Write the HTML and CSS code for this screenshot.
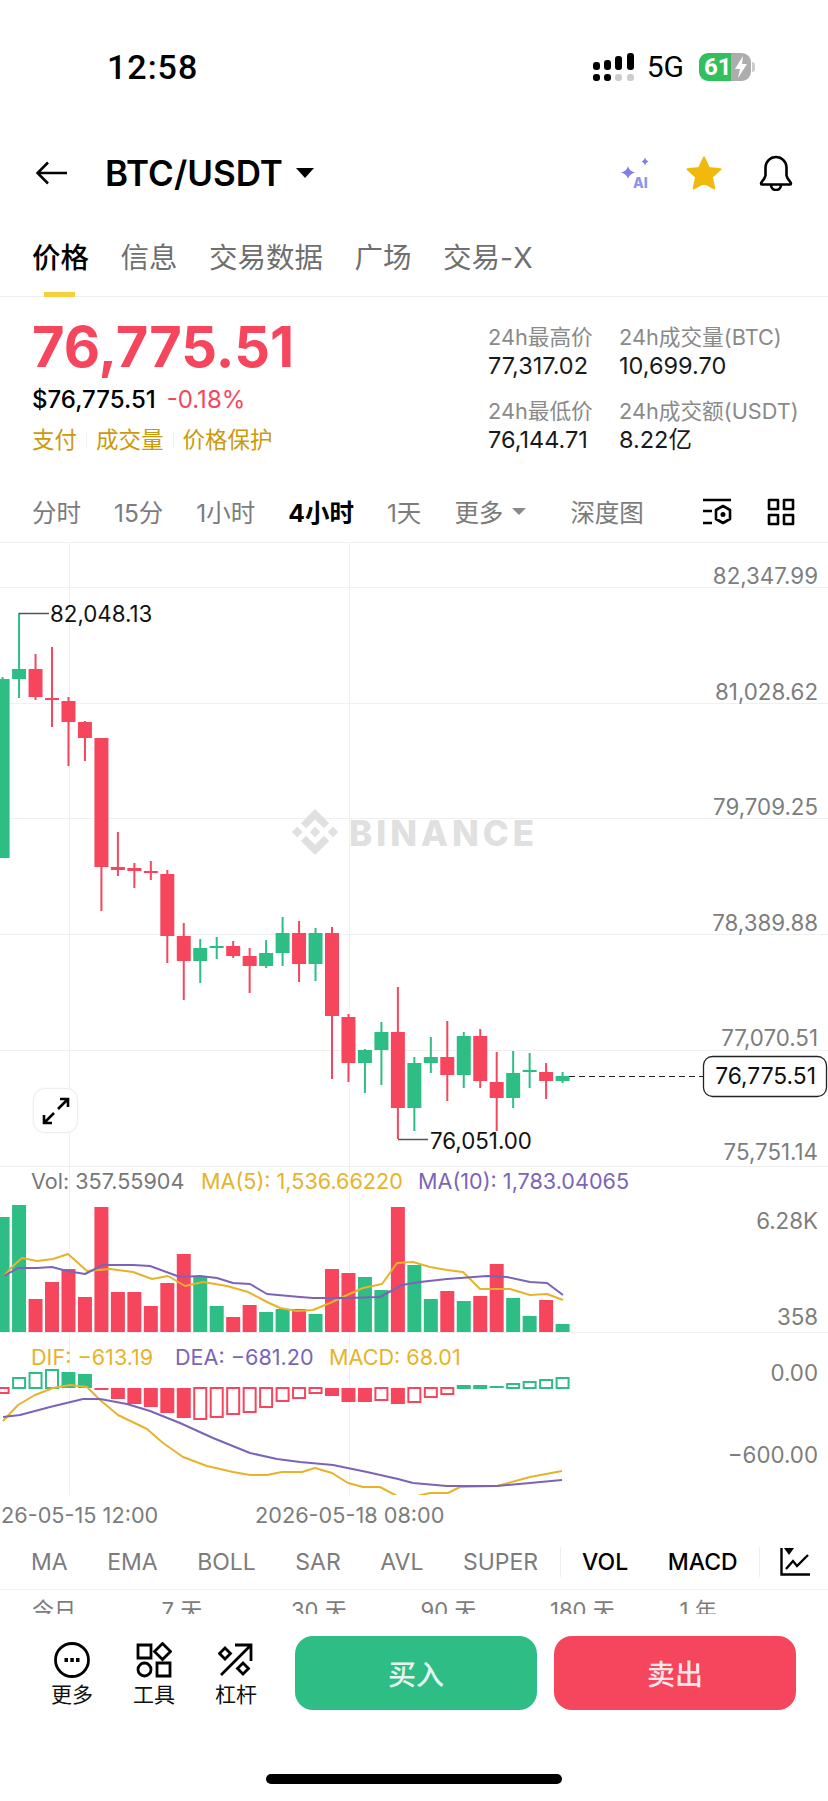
FILE: index.html
```html
<!DOCTYPE html>
<html lang="zh-CN">
<head>
    <meta charset="UTF-8">
    <title>BTC/USDT</title>
    <link rel="stylesheet" href="styles.css">
</head>
<body>
    <div class="status">
        <span class="time">12:58</span>
        <div class="status-right">
            <svg class="signal" width="41" height="28" viewBox="0 0 41 28">
                <rect x="0" y="9" width="7" height="8" rx="3"/>
                <rect x="11" y="7" width="7" height="10" rx="3"/>
                <rect x="22" y="3" width="7" height="14" rx="3"/>
                <rect x="34" y="0" width="7" height="17" rx="3"/>
                <rect x="0" y="21" width="7" height="7" rx="3"/>
                <rect x="11" y="21" width="7" height="7" rx="3"/>
                <rect x="22" y="21" width="7" height="7" rx="3" fill="#ccc"/>
                <rect x="34" y="21" width="7" height="7" rx="3" fill="#ccc"/>
            </svg>
            <span class="net">5G</span>
            <div class="battery">
                <span class="level">61</span>
                <svg class="bolt" width="14" height="22" viewBox="0 0 14 22"><path d="M9 0 1 13h5l-2 9 9-14H8z" fill="#fff"/></svg>
            </div>
            <span class="nub"></span>
        </div>
    </div>

    <div class="nav">
        <svg class="back" width="32" height="24" viewBox="0 0 32 24"><path d="M31 12H2M12 1.500 1.500 12 12 22.500" fill="none" stroke="#000" stroke-width="2.600"/></svg>
        <span class="pair">BTC/USDT</span>
        <span class="pair-caret"></span>
        <div class="nav-icons">
            <svg class="ai" width="32" height="32" viewBox="0 0 32 32">
                <path d="M7 9q1 5 7 6.500q-6 1.500-7 6.500q-1-5-7-6.500q6-1.500 7-6.500z" fill="#7f7df0"/>
                <path d="M24 0.500q.5 3 3.500 4q-3 1-3.500 4.500q-.5-3.500-3.500-4.500q3-1 3.500-4z" fill="#7f7df0"/>
                <text x="12" y="31" class="ai-mark">AI</text>
            </svg>
            <svg class="star" width="36" height="34" viewBox="0 0 36 34"><path d="M18 1.500l4.900 10.500 11.600 1.300-8.600 7.800 2.400 11.400L18 26.800 7.700 32.500l2.400-11.400-8.600-7.800 11.600-1.300z" fill="#f0b90b" stroke="#f0b90b" stroke-width="2" stroke-linejoin="round"/></svg>
            <svg class="bell" width="34" height="36" viewBox="0 0 34 36"><path d="M2 28.500c0-2 3.500-3.500 4.500-8V12.500a10.500 10.500 0 0 1 21 0v8c1 4.500 4.500 6 4.500 8 0 .6-.5 1-1 1H3c-.6 0-1-.4-1-1zM12 30a5 5 0 0 0 10 0" fill="none" stroke="#000" stroke-width="2.600" stroke-linejoin="round"/></svg>
        </div>
    </div>

    <div class="tabs">
        <span class="tab active">价格</span>
        <span class="tab">信息</span>
        <span class="tab">交易数据</span>
        <span class="tab">广场</span>
        <span class="tab">交易-X</span>
    </div>

    <div class="ticker">
        <div class="ticker-main">
            <div class="last-price">76,775.51</div>
            <div class="usd-row"><span class="usd">$76,775.51</span><span class="change">-0.18%</span></div>
            <div class="links"><span>支付</span><i></i><span>成交量</span><i></i><span>价格保护</span></div>
        </div>
        <div class="stats">
            <div class="stat-label">24h最高价</div>
            <div class="stat-label">24h成交量(BTC)</div>
            <div class="stat-value">77,317.02</div>
            <div class="stat-value">10,699.70</div>
            <div class="stat-label second">24h最低价</div>
            <div class="stat-label second">24h成交额(USDT)</div>
            <div class="stat-value">76,144.71</div>
            <div class="stat-value">8.22亿</div>
        </div>
    </div>

    <div class="frames">
        <span>分时</span>
        <span>15分</span>
        <span>1小时</span>
        <span class="on">4小时</span>
        <span>1天</span>
        <span class="more">更多<i class="more-caret"></i></span>
        <span class="depth">深度图</span>
        <svg class="frame-icon" width="30" height="28" viewBox="0 0 30 28">
            <path d="M1 2h28M1 13h9M1 25h9" fill="none" stroke="#000" stroke-width="2.600"/>
            <path d="M21 8l7 4v9l-7 4-7-4v-9z" fill="none" stroke="#000" stroke-width="2.600" stroke-linejoin="round"/>
            <circle cx="21" cy="16.500" r="2.500"/>
        </svg>
        <svg class="grid-icon" width="28" height="28" viewBox="0 0 28 28">
            <path d="M2 2h9v9H2zM17 2h9v9h-9zM2 17h9v9H2zM17 17h9v9h-9z" fill="none" stroke="#000" stroke-width="2.600" stroke-linejoin="round"/>
        </svg>
    </div>

    <div class="chart">
        <svg id="plot" width="828" height="952" viewBox="0 543 828 952"></svg>
        <div class="expand">
            <svg width="28" height="28" viewBox="0 0 28 28"><path d="M16 12 26 2M18 2h8v8M12 16 2 26M2 18v8h8" fill="none" stroke="#000" stroke-width="2.600"/></svg>
        </div>
    </div>

    <div class="dates">
        <span class="date-a">26-05-15 12:00</span>
        <span>2026-05-18 08:00</span>
    </div>

    <div class="indicators">
        <span>MA</span>
        <span>EMA</span>
        <span>BOLL</span>
        <span>SAR</span>
        <span>AVL</span>
        <span>SUPER</span>
        <i class="ind-sep"></i>
        <span class="on">VOL</span>
        <span class="on">MACD</span>
        <i class="ind-sep"></i>
        <svg class="ind-icon" width="30" height="28" viewBox="0 0 30 28">
            <path d="M1.500 0v26.500H30" fill="none" stroke="#000" stroke-width="2.400"/>
            <path d="M6 21l7-8 4 5 11-11" fill="none" stroke="#000" stroke-width="2.400"/>
            <path d="M4 0h10l-5 7z"/>
        </svg>
    </div>

    <div class="ranges">
        <span>今日</span>
        <span>7 天</span>
        <span>30 天</span>
        <span>90 天</span>
        <span>180 天</span>
        <span>1 年</span>
    </div>

    <div class="actions">
        <div class="tool tool-more">
            <svg width="36" height="36" viewBox="0 0 36 36">
                <circle cx="18" cy="18" r="16.500" fill="none" stroke="#000" stroke-width="2.800"/>
                <path d="M10.500 16h3.500v4h-3.500zM16.300 16h3.500v4h-3.500zM22 16h3.500v4H22z"/>
            </svg>
            <span>更多</span>
        </div>
        <div class="tool tool-kit">
            <svg width="36" height="36" viewBox="0 0 36 36">
                <path d="M2 3h13v13H2zM21 21h13v13H21z" fill="none" stroke="#000" stroke-width="2.800"/>
                <path d="M26.500 1.500l8 8-8 8-8-8z" fill="none" stroke="#000" stroke-width="2.800"/>
                <circle cx="8.500" cy="27.500" r="6.500" fill="none" stroke="#000" stroke-width="2.800"/>
            </svg>
            <span>工具</span>
        </div>
        <div class="tool tool-lever">
            <svg width="36" height="36" viewBox="0 0 36 36">
                <path d="M3 33 33 3M17 3h16v16" fill="none" stroke="#000" stroke-width="2.800"/>
                <path d="M7 6l5.500 5.500L7 17l-5.500-5.500zM25 21l5.500 5.500L25 32l-5.500-5.500z" fill="none" stroke="#000" stroke-width="2.800"/>
            </svg>
            <span>杠杆</span>
        </div>
        <div class="trade buy">买入</div>
        <div class="trade sell">卖出</div>
    </div>

    <div class="home-bar"></div>

    <script src="chart.js"></script>
</body>
</html>
```

FILE: styles.css
```css
*{
    box-sizing: border-box;
}
body{
    margin: 0;
    width: 828px;
    height: 1801px;
    overflow: hidden;
    background-color: #fff;
    color: #000;
    font-family: Inter, "Noto Sans CJK SC", sans-serif;
}

/* status bar */
.status{
    display: flex;
    align-items: center;
    justify-content: space-between;
    height: 143px;
    padding: 0 73px 10px 107px;
}
.time{
    font-family: Roboto, sans-serif;
    font-size: 34px;
    font-weight: 500;
    letter-spacing: 1px;
}
.status-right{
    display: flex;
    align-items: center;
}
.net{
    margin-left: 13px;
    font-family: Roboto, sans-serif;
    font-size: 30px;
    font-weight: 400;
}
.battery{
    display: flex;
    align-items: center;
    width: 52px;
    height: 28px;
    margin-left: 15px;
    border-radius: 9px;
    overflow: hidden;
    background: linear-gradient(90deg, #34bf5f 32px, #adadad 32px);
}
.level{
    width: 32px;
    padding-left: 5px;
    color: #fff;
    font-family: Roboto, sans-serif;
    font-size: 24px;
    font-weight: 700;
    line-height: 28px;
}
.bolt{
    margin-left: 3px;
}
.nub{
    width: 3px;
    height: 10px;
    margin-left: 1px;
    border-radius: 0 3px 3px 0;
    background-color: #ccc;
}

/* title row */
.nav{
    display: flex;
    align-items: center;
    height: 60px;
    padding-left: 36px;
}
.pair{
    margin-left: 37px;
    font-size: 35px;
    font-weight: 600;
}
.pair-caret{
    width: 0;
    height: 0;
    margin-left: 13px;
    border-top: 10px solid #000;
    border-left: 9px solid transparent;
    border-right: 9px solid transparent;
}
.nav-icons{
    display: flex;
    align-items: center;
    gap: 33px;
    margin-left: auto;
    padding-right: 35px;
}
.ai{
    overflow: visible;
}
.star{
    margin-right: 4px;
}
.ai-mark{
    font-size: 14px;
    font-weight: 800;
    fill: #8a96ea;
}

/* tabs */
.tabs{
    display: flex;
    gap: 31.500px;
    height: 94px;
    padding: 35px 0 0 32px;
    border-bottom: 1px solid #eee;
}
.tab{
    position: relative;
    height: 40px;
    color: #6f6f6f;
    font-size: 28.500px;
    line-height: 40px;
}
.tab.active{
    color: #000;
    font-weight: 500;
}
.tab.active::after{
    content: "";
    position: absolute;
    left: 12px;
    top: 54px;
    width: 31px;
    height: 5px;
    background-color: #f5cf3c;
}

/* price block */
.ticker{
    display: flex;
    height: 186px;
    padding-left: 32px;
}
.ticker-main{
    width: 456px;
    padding-top: 20px;
}
.last-price{
    color: #f6465d;
    font-size: 56px;
    font-weight: 700;
    line-height: 60px;
}
.usd-row{
    display: flex;
    gap: 11px;
    margin-top: 8px;
    font-size: 24px;
    line-height: 30px;
}
.usd{
    font-weight: 500;
}
.change{
    color: #f6465d;
}
.links{
    display: flex;
    align-items: center;
    gap: 9px;
    margin-top: 10px;
    color: #cb9a0c;
    font-size: 22.500px;
    line-height: 30px;
}
.links i{
    width: 1px;
    height: 16px;
    background-color: #f2f2f2;
}
.stats{
    display: grid;
    grid-template-columns: 131px auto;
    align-content: start;
    padding-top: 26px;
}
.stat-label{
    color: #8a8a8a;
    font-size: 21.700px;
    line-height: 28px;
}
.stat-label.second{
    margin-top: 16px;
}
.stat-value{
    color: #1a1a1a;
    font-size: 23.500px;
    line-height: 30px;
}

/* timeframe row */
.frames{
    display: flex;
    align-items: center;
    gap: 33px;
    height: 60px;
    padding: 0 33px 2px 32px;
    border-bottom: 1px solid #f0f0f0;
    color: #7c7c7c;
    font-size: 24.500px;
}
.frames .on{
    color: #000;
    font-weight: 700;
}
.more{
    display: flex;
    align-items: center;
}
.more-caret{
    width: 0;
    height: 0;
    margin-left: 9px;
    border-top: 7px solid #8a8a8a;
    border-left: 7px solid transparent;
    border-right: 7px solid transparent;
}
.depth{
    margin-left: 11px;
}
.frame-icon{
    margin-left: auto;
}
.grid-icon{
    margin-left: 2px;
}

/* chart */
.chart{
    position: relative;
    height: 952px;
}
#plot{
    display: block;
}
#plot text{
    font-size: 22.300px;
}
#plot text.legend{
    font-size: 21.600px;
}
#plot text.last{
    font-size: 22.800px;
}
#plot text.mark{
    font-size: 35px;
    font-weight: 800;
    letter-spacing: 4px;
}
.expand{
    position: absolute;
    left: 33px;
    top: 545px;
    display: flex;
    align-items: center;
    justify-content: center;
    width: 45px;
    height: 45px;
    border: 1px solid #eee;
    border-radius: 12px;
    background-color: #fff;
    box-shadow: 0 0 2px #eee;
}

/* date axis */
.dates{
    display: flex;
    height: 40px;
    padding-left: 1px;
    color: #7c7c7c;
    font-size: 21.700px;
    line-height: 40px;
}
.date-a{
    width: 254px;
}

/* indicator row */
.indicators{
    display: flex;
    align-items: center;
    gap: 39.500px;
    height: 55px;
    padding-left: 31px;
    border-bottom: 1px solid #f2f2f2;
    color: #7c7c7c;
    font-size: 23px;
}
.indicators .on{
    color: #000;
    font-weight: 500;
}
.ind-sep{
    width: 1px;
    height: 30px;
    margin: 0 -18px;
    background-color: #eee;
}
.ind-icon{
    margin-left: -2px;
}

/* cut off by the action bar, as on the phone */
.ranges{
    display: grid;
    grid-template-columns: repeat(6, 129.500px);
    height: 24px;
    overflow: hidden;
    padding-left: 32px;
    color: #7c7c7c;
    font-size: 22px;
    line-height: 40px;
}

/* bottom bar */
.actions{
    display: flex;
    align-items: flex-start;
    height: 160px;
    padding: 22px 32px 0 0;
}
.tool{
    display: flex;
    flex-direction: column;
    align-items: center;
    width: 44px;
    margin-top: 6px;
    font-size: 21px;
    line-height: 26px;
}
.tool span{
    flex: none;
    margin-top: 4px;
    color: #111;
}
.tool-more{
    margin-left: 50px;
}
.tool-kit,
.tool-lever{
    margin-left: 38px;
}
.trade{
    display: flex;
    align-items: center;
    justify-content: center;
    width: 242px;
    height: 74px;
    border-radius: 18px;
    color: rgba(255,255,255,.9);
    font-size: 28px;
    font-weight: 500;
}
.buy{
    margin-left: 37px;
    background-color: #2ebd85;
}
.sell{
    margin-left: 17px;
    background-color: #f6465d;
}
.home-bar{
    width: 296px;
    height: 10px;
    margin-left: 266px;
    border-radius: 5px;
    background-color: #000;
}
```

FILE: chart.js
```js
var RED = "#f6465d";
var GREEN = "#2ebd85";
var YELLOW = "#e6b32a";
var PURPLE = "#7b64b8";
var GREY = "#7d7d7d";
var BW = 14; //candle width

function cx(k){
    return 2.6 + 16.47 * k;
}

//[color, wickTop, bodyTop, bodyBottom, wickBottom]
var candles = [
    ["g",677,679,858,858],["g",613,669,679,698],["r",654,669,697,700],["r",647,698,700,727],
    ["r",697,701,722,766],["r",721,722,738,761],["r",738,738,867,911],["r",832,867,870,876],
    ["r",863,868,871,888],["r",861,871,873,880],["r",870,874,936,963],["r",923,936,961,1000],
    ["g",939,948,961,983],["g",937,946,948,959],["r",941,946,956,958],["r",948,956,966,993],
    ["g",940,953,966,968],["g",917,933,953,966],["r",921,933,964,982],["g",928,933,964,981],
    ["r",927,933,1016,1079],["r",1014,1017,1063,1082],["g",1049,1050,1063,1093],["g",1022,1032,1050,1085],
    ["r",987,1032,1108,1139],["g",1057,1063,1108,1131],["g",1037,1057,1063,1073],["r",1021,1057,1075,1101],
    ["g",1032,1036,1075,1088],["r",1029,1036,1081,1088],["r",1052,1082,1098,1131],["g",1051,1073,1098,1108],
    ["g",1053,1070,1072,1088],["r",1063,1072,1081,1099],["g",1072,1076,1081,1083]
];

var volTops = [1217,1205,1299,1282,1269,1297,1207,1292,1292,1306,1283,1254,1277,1306,1317,1305,1312,1309,
    1309,1314,1269,1273,1277,1290,1207,1265,1299,1291,1301,1296,1264,1298,1316,1300,1324];

//[color, style, top, bottom]  s = solid, h = hollow
var macd = [
    ["r","h",1388,1393],["g","h",1378,1388],["g","h",1373,1388],["g","h",1370,1388],["g","s",1372,1388],
    ["g","s",1374,1388],["r","s",1388,1390],["r","s",1388,1399],["r","s",1388,1404],["r","s",1388,1407],
    ["r","s",1388,1413],["r","s",1388,1418],["r","h",1388,1419],["r","h",1388,1417],["r","h",1388,1414],
    ["r","h",1388,1412],["r","h",1388,1407],["r","h",1388,1401],["r","h",1388,1398],["r","h",1388,1393],
    ["r","s",1388,1396],["r","s",1388,1402],["r","s",1388,1402],["r","h",1388,1400],["r","s",1388,1404],
    ["r","h",1388,1402],["r","h",1388,1397],["r","h",1388,1394],["g","s",1385,1389],["g","s",1385,1389],
    ["g","s",1386,1388],["g","h",1384,1388],["g","h",1382,1388],["g","h",1380,1388],["g","h",1378,1388]
];

var ma5 = "4,1276 12,1267 22,1258 37,1261 53,1259 68,1254 87,1271 110,1269 133,1272 152,1279 168,1276 185,1286 203,1282 227,1286 248,1292 267,1302 280,1308 297,1311 313,1310 330,1303 347,1295 363,1288 382,1284 397,1263 413,1262 430,1267 447,1270 463,1272 480,1289 510,1289 530,1295 547,1294 563,1300";
var ma10 = "4,1276 18,1268 37,1268 52,1267 67,1271 85,1274 103,1265 133,1265 150,1266 180,1277 200,1276 217,1278 233,1283 250,1284 267,1294 300,1297 313,1298 347,1298 380,1297 402,1285 420,1282 447,1279 487,1276 507,1277 530,1282 547,1283 563,1295";
var dif = "3,1421 18,1405 35,1395 53,1388 70,1385 87,1387 100,1400 118,1415 147,1429 163,1443 183,1457 207,1466 233,1472 250,1475 267,1475 282,1472 302,1472 315,1468 332,1473 348,1483 363,1487 380,1487 397,1496 417,1496 430,1493 448,1493 460,1487 497,1486 530,1477 562,1471";
var dea = "3,1417 20,1415 50,1407 83,1399 100,1399 127,1404 150,1411 180,1423 213,1438 250,1453 277,1459 300,1462 333,1465 367,1472 398,1479 413,1483 447,1486 497,1486 530,1483 562,1480";

var out = [];

function rect(x, y, w, h, fill){
    out.push('<rect x="' + x + '" y="' + y + '" width="' + w + '" height="' + h + '" fill="' + fill + '"/>');
}
function label(x, y, str, fill, anchor, cls){
    out.push('<text x="' + x + '" y="' + y + '" fill="' + fill + '" text-anchor="' + (anchor || "start") + '" class="' + (cls || "") + '">' + str + '</text>');
}
function legend(x, y, str, fill){
    label(x, y, str, fill, "start", "legend");
}
function line(points, color){
    out.push('<polyline points="' + points + '" fill="none" stroke="' + color + '" stroke-width="2" stroke-linejoin="round"/>');
}

//grid
[587,703,818,934,1050,1166,1332,1495].forEach(function(y){
    rect(0, y, 828, 1, "#f0f0f0");
});
rect(69, 543, 1, 952, "#f0f0f0");
rect(349, 543, 1, 952, "#f0f0f0");

//watermark
out.push('<g transform="translate(292 809) scale(.364)" fill="#e0e0e0"><path d="M38.730 53.200 63.300 28.630 87.890 53.220 102.200 38.910 63.300 0 24.420 38.900zM0 63.310 14.300 49 28.610 63.310 14.310 77.610zM38.730 73.410 63.320 98 87.920 73.400 102.230 87.690 63.330 126.600 24.420 87.720zM98.280 63.310 112.580 49 126.890 63.300 112.580 77.620zM77.830 63.300 63.320 48.780 52.590 59.510 51.350 60.740 48.810 63.280 63.320 77.780z"/></g>');
label(349, 846, "BINANCE", "#e0e0e0", "start", "mark");

//candles
candles.forEach(function(c, k){
    var col = c[0] == "r" ? RED : GREEN;
    var x = cx(k);
    rect(x - 1, c[1], 2, c[4] - c[1], col);
    rect(x - BW / 2, c[2], BW, Math.max(c[3] - c[2], 2), col);
});

//high / low markers
out.push('<path d="M19 613.500H49M398 1139.500H428" stroke="#555" stroke-width="1.500" fill="none"/>');
label(50, 622, "82,048.13", "#111");
label(430, 1149, "76,051.00", "#111");

//last price line
out.push('<path d="M569 1076.500H704" stroke="#222" stroke-width="1.200" stroke-dasharray="6 4" fill="none"/>');
out.push('<rect x="703.500" y="1056.500" width="123" height="40" rx="9" fill="#fff" stroke="#222" stroke-width="1.300"/>');
label(816, 1084, "76,775.51", "#111", "end", "last");

//axis labels
[["82,347.99",584],["81,028.62",700],["79,709.25",815],["78,389.88",931],["77,070.51",1046],["75,751.14",1160],
 ["6.28K",1229],["358",1325],["0.00",1381],["\u2212600.00",1463]].forEach(function(a){
    label(818, a[1], a[0], GREY, "end");
});

//volume
volTops.forEach(function(top, k){
    rect(cx(k) - BW / 2, top, BW, 1332 - top, candles[k][0] == "r" ? RED : GREEN);
});
line(ma5, YELLOW);
line(ma10, PURPLE);

//legends
legend(31, 1189, "Vol: 357.55904", "#777");
legend(201, 1189, "MA(5): 1,536.66220", YELLOW);
legend(418, 1189, "MA(10): 1,783.04065", PURPLE);
legend(31, 1365, "DIF: \u2212613.19", YELLOW);
legend(175, 1365, "DEA: \u2212681.20", PURPLE);
legend(329, 1365, "MACD: 68.01", YELLOW);

//macd
macd.forEach(function(m, k){
    var col = m[0] == "r" ? RED : GREEN;
    if(m[1] == "s"){
        rect(cx(k) - BW / 2, m[2], BW, m[3] - m[2], col);
    }else{
        out.push('<rect x="' + (cx(k) - BW / 2 + 1) + '" y="' + m[2] + '" width="' + (BW - 2) + '" height="' + (m[3] - m[2]) + '" fill="#fff" stroke="' + col + '" stroke-width="2"/>');
    }
});
line(dif, YELLOW);
line(dea, PURPLE);

document.getElementById("plot").innerHTML = out.join("");
```
